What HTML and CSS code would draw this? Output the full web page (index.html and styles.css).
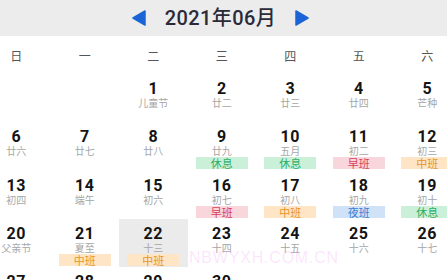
FILE: index.html
```html
<!DOCTYPE html>
<html lang="zh-CN">
<head>
<meta charset="utf-8">
<link rel="stylesheet" href="styles.css">
</head>
<body>
<div class="page">
  <header class="bar">
    <svg class="arrow" width="16" height="16" viewBox="0 0 16 16"><path d="M14 1 L2 8 L14 15 Z" fill="#1a64d6" stroke="#1a64d6" stroke-width="1.5" stroke-linejoin="round"/></svg>
    <h1 class="title">2021年06月</h1>
    <svg class="arrow" width="16" height="16" viewBox="0 0 16 16"><path d="M2 1 L14 8 L2 15 Z" fill="#1a64d6" stroke="#1a64d6" stroke-width="1.5" stroke-linejoin="round"/></svg>
  </header>
  <div class="weekdays">
    <span>日</span><span>一</span><span>二</span><span>三</span><span>四</span><span>五</span><span>六</span>
  </div>
  <div class="grid">
    <div class="cell"></div>
    <div class="cell"></div>
    <div class="cell"><b>1</b><i>儿童节</i></div>
    <div class="cell"><b>2</b><i>廿二</i></div>
    <div class="cell"><b>3</b><i>廿三</i></div>
    <div class="cell"><b>4</b><i>廿四</i></div>
    <div class="cell"><b>5</b><i>芒种</i></div>

    <div class="cell"><b>6</b><i>廿六</i></div>
    <div class="cell"><b>7</b><i>廿七</i></div>
    <div class="cell"><b>8</b><i>廿八</i></div>
    <div class="cell"><b>9</b><i>廿九</i><em class="tag rest">休息</em></div>
    <div class="cell"><b>10</b><i>五月</i><em class="tag rest">休息</em></div>
    <div class="cell"><b>11</b><i>初二</i><em class="tag early">早班</em></div>
    <div class="cell"><b>12</b><i>初三</i><em class="tag mid">中班</em></div>

    <div class="cell"><b>13</b><i>初四</i></div>
    <div class="cell"><b>14</b><i>端午</i></div>
    <div class="cell"><b>15</b><i>初六</i></div>
    <div class="cell"><b>16</b><i>初七</i><em class="tag early">早班</em></div>
    <div class="cell"><b>17</b><i>初八</i><em class="tag mid">中班</em></div>
    <div class="cell"><b>18</b><i>初九</i><em class="tag night">夜班</em></div>
    <div class="cell"><b>19</b><i>初十</i><em class="tag rest">休息</em></div>

    <div class="cell"><b>20</b><i>父亲节</i></div>
    <div class="cell"><b>21</b><i>夏至</i><em class="tag mid">中班</em></div>
    <div class="cell today"><b>22</b><i>十三</i><em class="tag mid">中班</em></div>
    <div class="cell"><b>23</b><i>十四</i></div>
    <div class="cell"><b>24</b><i>十五</i></div>
    <div class="cell"><b>25</b><i>十六</i></div>
    <div class="cell"><b>26</b><i>十七</i></div>

    <div class="cell"><b>27</b><i>十八</i></div>
    <div class="cell"><b>28</b><i>十九</i></div>
    <div class="cell"><b>29</b><i>二十</i></div>
    <div class="cell"><b>30</b><i>廿一</i></div>
    <div class="cell"></div>
    <div class="cell"></div>
    <div class="cell"></div>
  </div>
  <div class="watermark">NBWYXH.COM.CN</div>
</div>
</body>
</html>
```

FILE: styles.css
```css
html, body {
  margin: 0;
  padding: 0;
  background: #ffffff;
}
body {
  width: 447px;
  height: 280px;
  overflow: hidden;
  font-family: Roboto, "Noto Sans CJK SC", sans-serif;
}
.page {
  position: relative;
  width: 447px;
  height: 280px;
  overflow: hidden;
}
.bar {
  height: 36px;
  background: #ececec;
  display: flex;
  align-items: center;
  justify-content: center;
  gap: 18px;
  padding-right: 6px;
}
.arrow {
  display: block;
}
.title {
  margin: 0;
  font-size: 20px;
  font-weight: 500;
  color: #2a2a38;
  letter-spacing: 0.4px;
  line-height: 24px;
}
.weekdays {
  margin-left: -18px;
  width: 479.5px;
  display: grid;
  grid-template-columns: repeat(7, 68.5px);
  height: 37px;
  align-items: center;
  padding-top: 1px;
}
.weekdays span {
  text-align: center;
  font-size: 12px;
  color: #555;
  font-family: "Noto Sans CJK SC", sans-serif;
}
.grid {
  margin-left: -18px;
  width: 479.5px;
  display: grid;
  grid-template-columns: repeat(7, 68.5px);
  grid-auto-rows: 48.3px;
}
.cell {
  display: flex;
  flex-direction: column;
  align-items: center;
  padding-top: 6px;
  box-sizing: border-box;
}
.cell.today {
  background: #ebebeb;
}
.cell b {
  font-size: 16px;
  font-weight: 700;
  line-height: 17px;
  color: #141414;
  letter-spacing: 0.5px;
}
.cell i {
  font-style: normal;
  font-size: 10px;
  line-height: 11px;
  color: #a6a6a6;
  font-family: "Noto Sans CJK SC", sans-serif;
}
.tag {
  margin-top: 1px;
  width: 52px;
  height: 12px;
  line-height: 12px;
  font-style: normal;
  font-size: 11px;
  text-align: center;
  font-family: "Noto Sans CJK SC", sans-serif;
}
.rest { background: #cbf0d9; color: #2daf66; }
.early { background: #f9d6dc; color: #d8405c; }
.mid { background: #fde5c6; color: #e8952a; }
.night { background: #d0e2f8; color: #3a7dd4; }
.watermark {
  position: absolute;
  left: 189px;
  top: 249px;
  font-size: 16px;
  line-height: 18px;
  color: rgba(245, 160, 245, 0.28);
  font-family: "Liberation Sans", sans-serif;
  letter-spacing: 0.8px;
  pointer-events: none;
}
```
